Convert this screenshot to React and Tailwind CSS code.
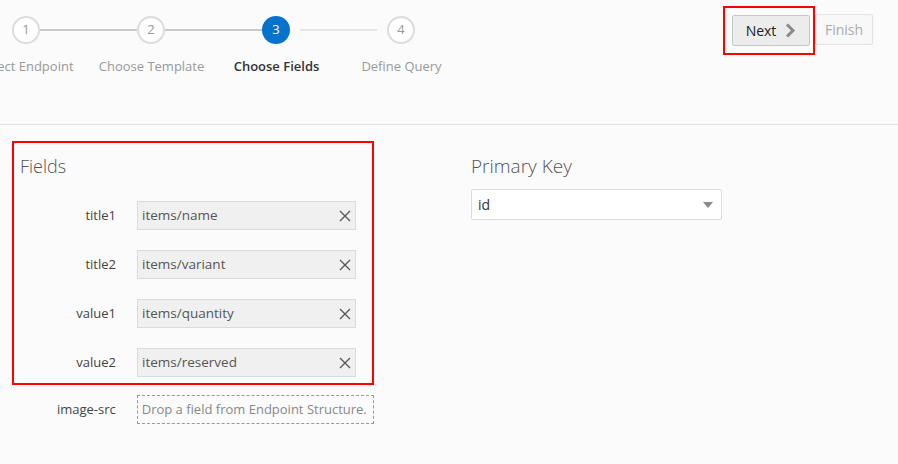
import React from "react";

const steps = [
  { n: 1, label: "Select Endpoint", state: "done" },
  { n: 2, label: "Choose Template", state: "done" },
  { n: 3, label: "Choose Fields", state: "current" },
  { n: 4, label: "Define Query", state: "todo" },
];

const fields = [
  { label: "title1", value: "items/name" },
  { label: "title2", value: "items/variant" },
  { label: "value1", value: "items/quantity" },
  { label: "value2", value: "items/reserved" },
];

const Circle = ({ step }) =>
  step.state === "current" ? (
    <div className="w-[28px] h-[28px] rounded-full bg-[#0572ce] text-white text-[13px] flex items-center justify-center shrink-0">
      {step.n}
    </div>
  ) : (
    <div className="w-[28px] h-[28px] rounded-full border-2 border-[#dcdcdc] bg-white text-[#9a9a9a] text-[13px] flex items-center justify-center shrink-0">
      {step.n}
    </div>
  );

const ClearIcon = () => (
  <svg width="12" height="12" viewBox="0 0 12 12" className="shrink-0">
    <path d="M1 1L11 11M11 1L1 11" stroke="#555" strokeWidth="1.3" />
  </svg>
);

const App = () => {
  return (
    <div
      className="w-[898px] h-[464px] overflow-hidden bg-[#fbfbfb] text-[#333]"
      style={{ fontFamily: '"Open Sans", "Noto Sans", sans-serif' }}
    >
      {/* header / train */}
      <div className="h-[125px] border-b border-[#e2e2e2] flex justify-between">
        <div className="pt-[16px]">
          <div className="flex items-center pl-[12px]">
            <Circle step={steps[0]} />
            <div className="w-[97px] h-[2px] bg-[#c9c9c9]" />
            <Circle step={steps[1]} />
            <div className="w-[97px] h-[2px] bg-[#c9c9c9]" />
            <Circle step={steps[2]} />
            <div className="w-[77px] h-[2px] bg-[#e6e6e6] mx-[10px]" />
            <Circle step={steps[3]} />
          </div>
          <div className="flex ml-[-36px] mt-[13px]">
            {steps.map((s) => (
              <div
                key={s.n}
                className={`w-[125px] text-center text-[13px] whitespace-nowrap ${
                  s.state === "current" ? "font-semibold text-[#333]" : "text-[#999]"
                }`}
              >
                {s.label}
              </div>
            ))}
          </div>
        </div>
        <div className="flex items-start pt-[6px] pr-[25px]">
          <div className="border-2 border-[#ff0000] p-[7px] pr-[3px]">
            <button className="h-[31px] w-[78px] border border-[#c8c8c8] bg-[#ececec] rounded-[2px] flex items-center justify-center gap-[9px] text-[14px] text-[#222]">
              Next
              <svg width="11" height="15" viewBox="0 0 11 15">
                <path d="M2 1.5L8 7.5L2 13.5" stroke="#8a8a8a" strokeWidth="3" fill="none" />
              </svg>
            </button>
          </div>
          <button className="mt-[8px] h-[31px] w-[58px] border border-[#e3e3e3] bg-[#f8f8f8] rounded-[2px] text-[14px] text-[#aaa]">
            Finish
          </button>
        </div>
      </div>

      {/* body */}
      <div className="flex pt-[16px] pl-[12px]">
        <div className="w-[362px]">
          <div className="border-2 border-[#ff0000] h-[244px] pl-[6px] pt-[10px]">
            <div className="text-[18px] font-light text-[#555] leading-[26px]">Fields</div>
            <div className="flex flex-col gap-[20px] mt-[22px]">
              {fields.map((f) => (
                <div key={f.label} className="flex items-center">
                  <div className="w-[96px] text-right text-[13px] text-[#444]">{f.label}</div>
                  <div className="ml-[21px] w-[219px] h-[29px] bg-[#f0f0f0] border border-[#dadada] flex items-center justify-between pl-[4px] pr-[4px] text-[13.5px] text-[#555]">
                    {f.value}
                    <ClearIcon />
                  </div>
                </div>
              ))}
            </div>
          </div>
          <div className="flex items-center mt-[10px] pl-[8px]">
            <div className="w-[96px] text-right text-[13px] text-[#444]">image-src</div>
            <div className="ml-[21px] w-[238px] h-[29px] border border-dashed border-[#999] flex items-center pl-[4px] text-[13px] text-[#888] whitespace-nowrap">
              Drop a field from Endpoint Structure.
            </div>
          </div>
        </div>
        <div className="ml-[97px] pt-[12px]">
          <div className="text-[19px] font-light text-[#555] leading-[26px]">Primary Key</div>
          <div className="mt-[10px] w-[251px] h-[31px] bg-white border border-[#dcdcdc] rounded-[2px] flex items-center justify-between pl-[6px] pr-[8px] text-[14px] text-[#333]">
            id
            <svg width="10" height="6" viewBox="0 0 10 6">
              <path d="M0 0H10L5 6Z" fill="#8a8a8a" />
            </svg>
          </div>
        </div>
      </div>
    </div>
  );
};

export default App;
